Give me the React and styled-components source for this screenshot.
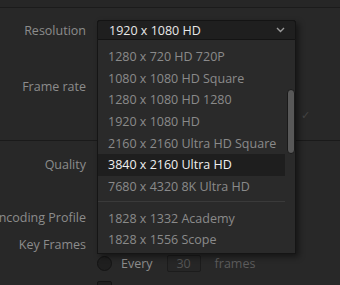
import React from "react";
import styled, { createGlobalStyle } from "styled-components";

const GlobalStyle = createGlobalStyle`
  html, body {
    margin: 0;
    padding: 0;
    background: #282828;
    overflow: hidden;
  }
  body {
    font-family: "Open Sans", "Noto Sans", sans-serif;
    font-size: 12.5px;
    color: #8c8c8c;
  }
`

const Page = styled.div`
  position: relative;
  width: 340px;
  height: 285px;
  overflow: hidden;
  background: #282828;
`

const TopStrip = styled.div`
  height: 7px;
  background: #262626;
  border-bottom: 1px solid #1b1b1b;
`

const Section = styled.div`
  display: flex;
  flex-direction: column;
  height: ${(p) => (p.height ? `${p.height}px` : "auto")};
  padding-top: ${(p) => p.pad}px;
  box-sizing: border-box;
  border-bottom: ${(p) => (p.line ? "1px solid #1a1a1a" : "none")};
`

const Row = styled.div`
  display: grid;
  flex-shrink: 0;
  grid-template-columns: 86px 199px;
  column-gap: 11px;
  align-items: center;
  height: ${(p) => p.h || 20}px;
  margin-bottom: ${(p) => p.gap || 0}px;
`

const Label = styled.div`
  text-align: right;
  white-space: nowrap;
  direction: rtl;
  overflow: visible;
  color: #8c8c8c;
`

const SelectBox = styled.div`
  height: 20px;
  background: #1f1f1f;
  border: 1px solid #151515;
  border-radius: 2px;
  box-sizing: border-box;
`

const CheckMark = styled.span`
  color: #444;
  font-size: 11px;
  margin-left: 204px;
`

const OptionLine = styled.div`
  display: flex;
  align-items: center;
  gap: 9px;
`

const Radio = styled.span`
  width: 13px;
  height: 13px;
  border-radius: 50%;
  background: #1f1f1f;
  border: 1px solid #141414;
`

const Word = styled.span`
  color: ${(p) => p.color};
  margin-right: ${(p) => p.mr || 0}px;
`

const Num = styled.span`
  width: 34px;
  height: 17px;
  margin-left: 2px;
  box-sizing: border-box;
  border: 1px solid #1c1c1c;
  border-radius: 2px;
  background: #262626;
  color: #555;
  text-align: center;
  line-height: 15px;
  margin-right: 5px;
`

const Check = styled.span`
  width: 13px;
  height: 13px;
  background: #1f1f1f;
  border: 1px solid #141414;
  border-radius: 2px;
`

const Dropdown = styled.div`
  position: absolute;
  left: 97px;
  top: 20px;
  width: 199px;
  box-shadow: 3px 3px 6px rgba(0, 0, 0, 0.45);
`

const Trigger = styled.div`
  display: flex;
  align-items: center;
  justify-content: space-between;
  height: 20px;
  box-sizing: border-box;
  padding: 0 10px 0 11px;
  background: #1f1f1f;
  border: 1px solid #141414;
  border-radius: 3px 3px 0 0;
  color: #e8e8e8;
`

const List = styled.div`
  position: relative;
  height: 214px;
  box-sizing: border-box;
  padding-top: 6px;
  background: #2a2a2a;
  border: 1px solid #151515;
  border-top: none;
`

const Item = styled.div`
  height: 21.67px;
  line-height: 21.67px;
  padding-left: 10px;
  margin-right: 10px;
  white-space: nowrap;
  background: ${(p) => (p.active ? "#1e1e1e" : "transparent")};
  color: ${(p) => (p.active ? "#f0f0f0" : "#8a8a8a")};
`

const Divider = styled.div`
  height: 1px;
  margin: 3px 10px 6px 0;
  background: #3a3a3a;
`

const Scrollbar = styled.div`
  position: absolute;
  left: 189px;
  top: 49px;
  width: 6px;
  height: 63px;
  background: #585858;
  border: 1px solid #1a1a1a;
  border-radius: 4px;
`

const items = [
  "1280 x 720 HD 720P",
  "1080 x 1080 HD Square",
  "1280 x 1080 HD 1280",
  "1920 x 1080 HD",
  "2160 x 2160 Ultra HD Square",
  "3840 x 2160 Ultra HD",
  "7680 x 4320 8K Ultra HD",
];

const extra = ["1828 x 1332 Academy", "1828 x 1556 Scope"];

function App() {
  return (
    <Page>
      <GlobalStyle />
      <TopStrip />
      <Section height={133} pad={12} line>
        <Row gap={36}>
          <Label>Resolution</Label>
          <SelectBox />
        </Row>
        <Row gap={8}>
          <Label>Frame rate</Label>
          <SelectBox />
        </Row>
        <Row>
          <span />
          <CheckMark>✓</CheckMark>
        </Row>
      </Section>
      <Section pad={13}>
        <Row gap={33}>
          <Label>Quality</Label>
          <span />
        </Row>
        <Row gap={7}>
          <Label>Encoding Profile</Label>
          <span />
        </Row>
        <Row>
          <Label>Key Frames</Label>
          <span />
        </Row>
        <Row h={19} gap={8}>
          <span />
          <OptionLine>
            <Radio />
            <Word color="#8c8c8c" mr={3}>Every</Word>
            <Num>30</Num>
            <Word color="#5c5c5c">frames</Word>
          </OptionLine>
        </Row>
        <Row h={14}>
          <span />
          <OptionLine>
            <Check />
          </OptionLine>
        </Row>
      </Section>

      <Dropdown>
        <Trigger>
          <span>1920 x 1080 HD</span>
          <svg width="9" height="6" viewBox="0 0 9 6">
            <path d="M1 1 L4.5 4.5 L8 1" fill="none" stroke="#9a9a9a" strokeWidth="1.4" />
          </svg>
        </Trigger>
        <List>
          {items.map((t) => (
            <Item key={t} active={t.startsWith("3840")}>
              {t}
            </Item>
          ))}
          <Divider />
          {extra.map((t) => (
            <Item key={t}>{t}</Item>
          ))}
          <Scrollbar />
        </List>
      </Dropdown>
    </Page>
  );
}

export default App;
